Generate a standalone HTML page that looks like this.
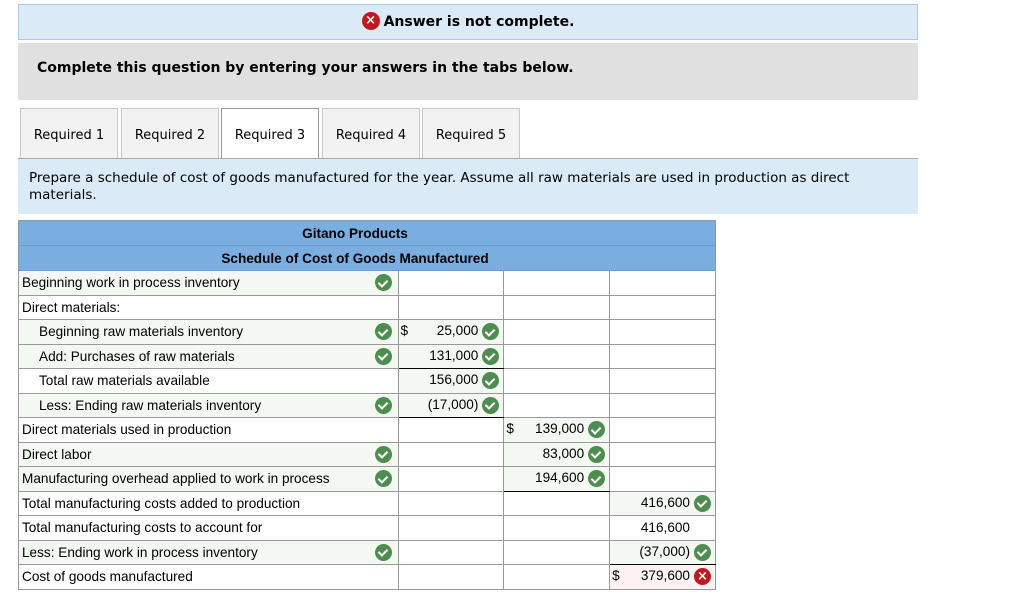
<!DOCTYPE html>
<html><head><meta charset="utf-8"><style>
*{box-sizing:border-box;margin:0;padding:0}
body{width:1024px;height:597px;background:#fff;font-family:"DejaVu Sans",Verdana,sans-serif;color:#000;position:relative;overflow:hidden}
.ban{position:absolute;left:18px;top:4px;width:900px;height:36px;background:#dbeaf7;border:1px solid #a9c9e6;text-align:center;font-weight:bold;font-size:14px;line-height:34px}
.q{position:absolute;left:18px;top:43px;width:900px;height:57px;background:#e0e0e0;font-weight:bold;font-size:14px;padding:17px 0 0 19px}
.tab{position:absolute;top:108px;height:50px;width:98px;background:#f2f2f2;border:1px solid #c8c8c8;border-bottom:none;font-size:13px;text-align:center;line-height:53px}
.tab.a{background:#fff;border-color:#999}
.tl{position:absolute;left:18px;top:158px;width:900px;border-top:1px solid #aaa}
.ins{position:absolute;left:18px;top:159px;width:900px;height:55px;background:#dbeaf7;font-size:13.5px;padding:11px 11px;line-height:17px}
table{position:absolute;left:18px;top:220px;border-collapse:collapse;font-family:"Liberation Sans",Arial,sans-serif;font-size:13.6px;width:698px}
td{border:1px solid #999;height:24.5px;padding:0 4px 0 3px;white-space:nowrap}
th{background:#7aade0;height:25px;font-weight:bold;font-size:13.6px;border:1px solid #999;border-bottom:1px solid #6b9bd0;padding-right:24px}
.l{width:380px;position:relative}
.n{width:106px;text-align:right;position:relative}
.g{background:#f4f8f2}
.r{background:#fdf2f2}
.in{padding-left:20px}
.ck{display:inline-block;width:17px;height:17px;border-radius:50%;background:#4f8c4f;vertical-align:middle;position:relative;margin-left:4px}
.ck:after{content:"";position:absolute;left:5px;top:3.5px;width:4px;height:7px;border:solid #fff;border-width:0 2px 2px 0;transform:rotate(45deg)}
.x{display:inline-block;width:17px;height:17px;border-radius:50%;background:#c0181f;color:#fff;font-size:13px;line-height:17px;text-align:center;vertical-align:middle;margin-left:4px;font-weight:bold;font-family:"DejaVu Sans",sans-serif}
.lc{position:absolute;right:6px;top:3px;margin:0}
.d{position:absolute;left:2px}
</style></head><body>
<div class="ban"><span class="x" style="margin:0 4px 2px 0;width:18px;height:18px;line-height:18px">×</span>Answer is not complete.</div>
<div class="q">Complete this question by entering your answers in the tabs below.</div>
<div class="tab" style="left:20px">Required 1</div>
<div class="tab" style="left:121px">Required 2</div>
<div class="tab a" style="left:221px;height:51px">Required 3</div>
<div class="tab" style="left:322px">Required 4</div>
<div class="tab" style="left:422px">Required 5</div>
<div class="tl"></div>
<div class="ins">Prepare a schedule of cost of goods manufactured for the year. Assume all raw materials are used in production as direct materials.</div>
<table>
<tr><th colspan="4">Gitano Products</th></tr>
<tr><th colspan="4">Schedule of Cost of Goods Manufactured</th></tr>
<tr><td class="l g">Beginning work in process inventory<span class="ck lc"></span></td><td class="n"></td><td class="n"></td><td class="n"></td></tr>
<tr><td class="l">Direct materials:</td><td class="n"></td><td class="n"></td><td class="n"></td></tr>
<tr><td class="l g in">Beginning raw materials inventory<span class="ck lc"></span></td><td class="n g"><span class="d">$</span>25,000<span class="ck"></span></td><td class="n"></td><td class="n"></td></tr>
<tr><td class="l g in">Add: Purchases of raw materials<span class="ck lc"></span></td><td class="n g" style="border-bottom:1px solid #000">131,000<span class="ck"></span></td><td class="n"></td><td class="n"></td></tr>
<tr><td class="l in">Total raw materials available</td><td class="n g">156,000<span class="ck"></span></td><td class="n"></td><td class="n"></td></tr>
<tr><td class="l g in">Less: Ending raw materials inventory<span class="ck lc"></span></td><td class="n g" style="border-bottom:1px solid #000">(17,000)<span class="ck"></span></td><td class="n"></td><td class="n"></td></tr>
<tr><td class="l">Direct materials used in production</td><td class="n"></td><td class="n g"><span class="d">$</span>139,000<span class="ck"></span></td><td class="n"></td></tr>
<tr><td class="l g">Direct labor<span class="ck lc"></span></td><td class="n"></td><td class="n g">83,000<span class="ck"></span></td><td class="n"></td></tr>
<tr><td class="l g">Manufacturing overhead applied to work in process<span class="ck lc"></span></td><td class="n"></td><td class="n g" style="border-bottom:1px solid #000">194,600<span class="ck"></span></td><td class="n"></td></tr>
<tr><td class="l">Total manufacturing costs added to production</td><td class="n"></td><td class="n"></td><td class="n g">416,600<span class="ck"></span></td></tr>
<tr><td class="l">Total manufacturing costs to account for</td><td class="n"></td><td class="n"></td><td class="n" style="padding-right:25px">416,600</td></tr>
<tr><td class="l g">Less: Ending work in process inventory<span class="ck lc"></span></td><td class="n"></td><td class="n"></td><td class="n g" style="border-bottom:1px solid #000">(37,000)<span class="ck"></span></td></tr>
<tr><td class="l">Cost of goods manufactured</td><td class="n"></td><td class="n"></td><td class="n r"><span class="d">$</span>379,600<span class="x">×</span></td></tr>
</table>
</body></html>
